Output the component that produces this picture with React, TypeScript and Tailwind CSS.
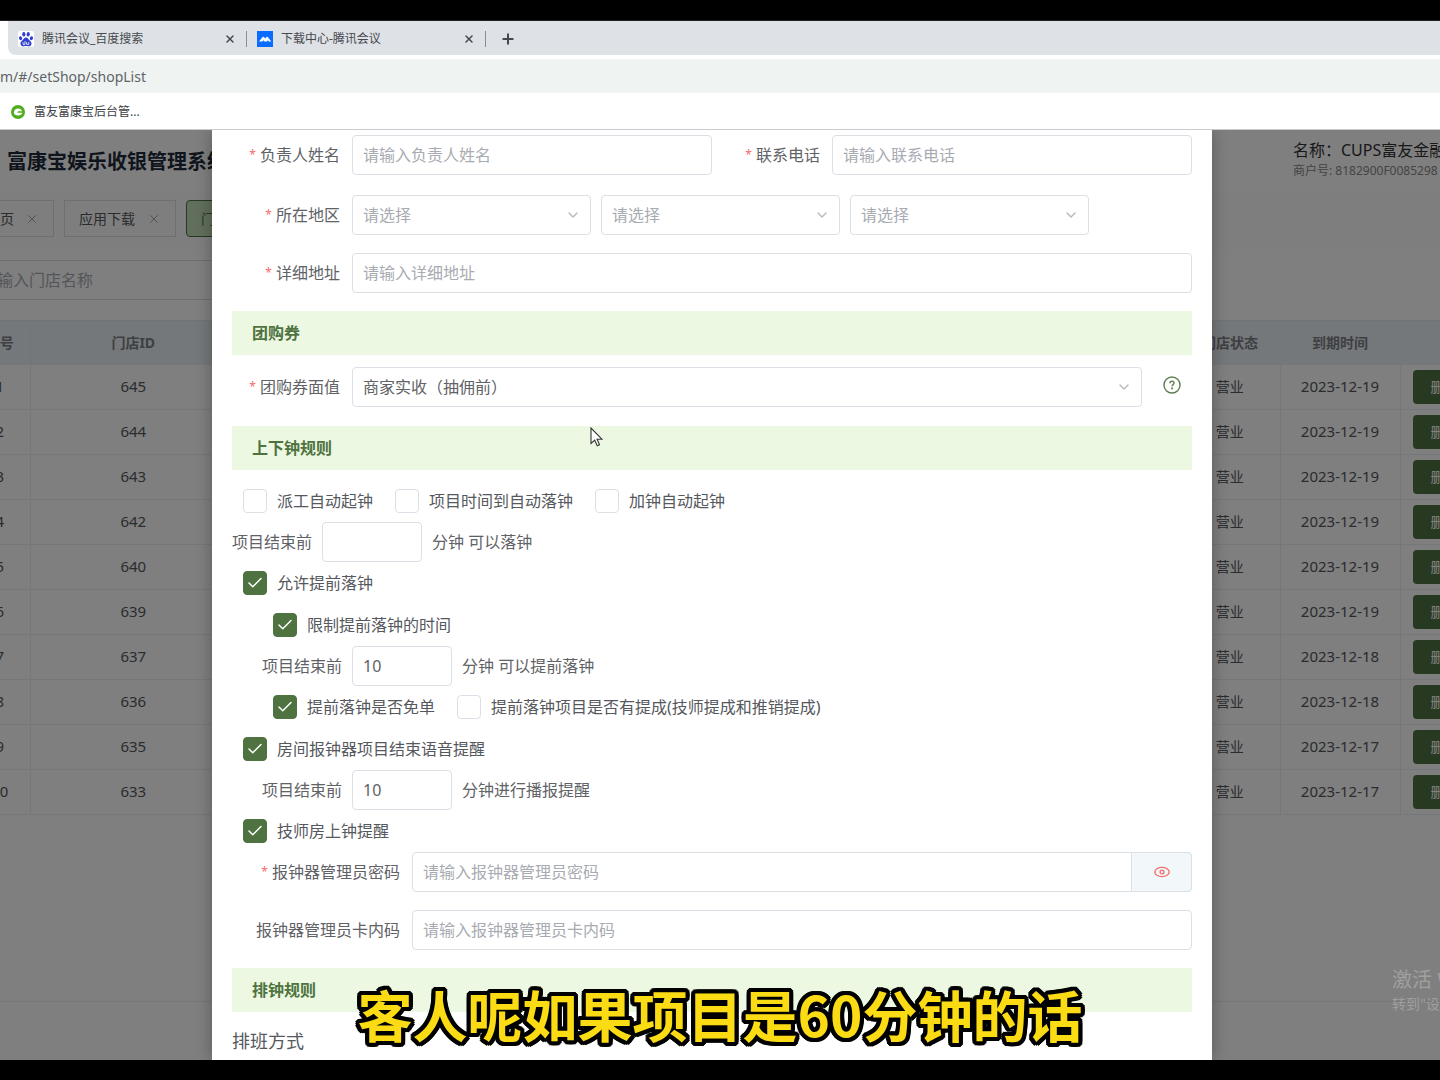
import { useState } from 'react'
import type { ReactNode } from 'react'
import { Check, ChevronDown, Plus, X } from 'lucide-react'

interface Shop {
  no: number
  id: string
  expires: string
}

const SHOPS: Shop[] = [
  { no: 1, id: '645', expires: '2023-12-19' },
  { no: 2, id: '644', expires: '2023-12-19' },
  { no: 3, id: '643', expires: '2023-12-19' },
  { no: 4, id: '642', expires: '2023-12-19' },
  { no: 5, id: '640', expires: '2023-12-19' },
  { no: 6, id: '639', expires: '2023-12-19' },
  { no: 7, id: '637', expires: '2023-12-18' },
  { no: 8, id: '636', expires: '2023-12-18' },
  { no: 9, id: '635', expires: '2023-12-17' },
  { no: 10, id: '633', expires: '2023-12-17' },
]

const inputClass =
  'h-10 rounded border border-[#dcdfe6] bg-white px-2.5 text-base text-[#606266] placeholder:text-[#a8abb2] focus:outline-none focus:border-[#4f7340]'

// ── Icons ──

function BaiduIcon() {
  return (
    <svg viewBox="0 0 16 16" className="size-4 shrink-0" aria-hidden="true">
      <rect width="16" height="16" rx="2" fill="#fff" />
      <g fill="#2f3fd0">
        <ellipse cx="2.6" cy="7.2" rx="1.6" ry="2" transform="rotate(-15 2.6 7.2)" />
        <ellipse cx="5.8" cy="3.2" rx="1.6" ry="2.2" />
        <ellipse cx="10.2" cy="3.2" rx="1.6" ry="2.2" transform="rotate(8 10.2 3.2)" />
        <ellipse cx="13.4" cy="7.2" rx="1.6" ry="2" transform="rotate(15 13.4 7.2)" />
        <path d="M8 6.4c1.7 0 2.3 1.6 3.4 2.8 1.2 1.2 2.4 2 2.1 3.8-.3 2-2 2.5-3.4 2.2-1.4-.3-2.8-.3-4.2 0-1.4.3-3.1-.2-3.4-2.2-.3-1.8.9-2.6 2.100-3.800C5.700 8 6.300 6.400 8 6.400z" />
      </g>
      <path d="M5 11.200v2.200h2v-3.400M8.600 11v2.400h2.200V11" fill="none" stroke="#fff" strokeWidth="0.8" />
    </svg>
  )
}

function MeetingIcon() {
  return (
    <svg viewBox="0 0 16 16" className="size-4 shrink-0" aria-hidden="true">
      <rect width="16" height="16" fill="#0a6cff" />
      <path d="M2 10.600 5.200 6.400c.6-.8 1.600-.8 2.200 0l.8 1.100.8-1.100c.6-.8 1.600-.8 2.200 0l3 4.200h-2.300l-1-1.300-1 1.300H7.400l-1-1.300-1 1.300z" fill="#fff" />
    </svg>
  )
}

function SiteIcon() {
  return (
    <svg viewBox="0 0 14 14" className="size-3.5 shrink-0" aria-hidden="true">
      <circle cx="7" cy="7" r="7" fill="#4fae1e" />
      <path d="M2.800 7.800C3 4.800 4.800 3.400 7.200 3.400c2 0 3.400 1.200 3.900 2.900H7.600c-.8 0-1.200.5-1.200 1.500h5c-.3 1.600-2 2.700-4.200 2.700-2.400 0-4.200-.9-4.400-2.700z" fill="#fff" />
    </svg>
  )
}

function EyeIcon() {
  return (
    <svg viewBox="0 0 16 16" className="size-4" fill="none" stroke="#f07070" strokeWidth="1.400" aria-hidden="true">
      <ellipse cx="8" cy="8" rx="7.200" ry="4.600" />
      <circle cx="8" cy="8" r="1.900" />
    </svg>
  )
}

function HelpIcon() {
  return (
    <svg viewBox="0 0 18 18" className="size-[18px]" fill="none" stroke="#5f7f52" strokeWidth="1.400" aria-hidden="true">
      <circle cx="9" cy="9" r="8" />
      <path d="M6.900 7.300c0-1.300.9-2.100 2.100-2.100s2.100.8 2.100 1.900c0 1.500-2 1.500-2 3.200" />
      <circle cx="9.100" cy="12.400" r="0.400" />
    </svg>
  )
}

// ── Form parts ──

function FieldLabel({ htmlFor, required, wide, children }: { htmlFor: string; required?: boolean; wide?: boolean; children: ReactNode }) {
  return (
    <label
      htmlFor={htmlFor}
      className={`flex shrink-0 justify-end gap-1 pr-3 whitespace-nowrap text-[#606266] ${wide ? 'w-[180px]' : 'w-[120px]'}`}
    >
      {required && <span className="text-xs leading-6 text-[#f56c6c]">*</span>}
      {children}
    </label>
  )
}

function SelectBox({ id, label, text, filled, className }: { id: string; label?: string; text: string; filled?: boolean; className: string }) {
  return (
    <div className={`relative ${className}`}>
      <select
        id={id}
        aria-label={label}
        className={`h-10 w-full appearance-none rounded border border-[#dcdfe6] bg-white px-2.5 focus:outline-none ${filled ? 'text-[#606266]' : 'text-[#a8abb2]'}`}
      >
        <option>{text}</option>
      </select>
      <ChevronDown className="pointer-events-none absolute top-3 right-2.5 size-4 text-[#b4b8bf]" strokeWidth={2} />
    </div>
  )
}

function CheckItem({ label, defaultChecked = false }: { label: string; defaultChecked?: boolean }) {
  const [checked, setChecked] = useState(defaultChecked)
  return (
    <label className="flex items-center gap-2.5 text-[#55585d]">
      <span className="grid size-6 place-items-center">
        <input
          type="checkbox"
          checked={checked}
          onChange={(e) => setChecked(e.target.checked)}
          className="col-start-1 row-start-1 size-6 appearance-none rounded border border-[#dcdfe6] bg-white checked:border-[#4f7340] checked:bg-[#4f7340]"
        />
        {checked && (
          <Check className="pointer-events-none col-start-1 row-start-1 size-[18px] text-white" strokeWidth={2} />
        )}
      </span>
      {label}
    </label>
  )
}

function MinutesRow({ id, value, after, indent }: { id: string; value: string; after: string; indent?: boolean }) {
  return (
    <div className={`flex h-10 items-center gap-2.5 text-[#606266] ${indent ? 'pl-[30px]' : ''}`}>
      <label htmlFor={id}>项目结束前</label>
      <input id={id} type="text" defaultValue={value} className={`${inputClass} w-[100px]`} />
      <span>{after}</span>
    </div>
  )
}

function SectionTitle({ children }: { children: ReactNode }) {
  return (
    <h2 className="flex h-11 items-center bg-[#ecf8e1] px-5 text-base font-bold text-[#4f7340]">{children}</h2>
  )
}

function ShopForm() {
  return (
    <form className="min-w-0 flex-1 overflow-hidden bg-white px-5 pt-[5px] text-base shadow-[0_0_16px_rgba(0,0,0,0.3)]">
      <div className="mb-5 flex items-center">
        <FieldLabel htmlFor="owner" required>负责人姓名</FieldLabel>
        <input id="owner" type="text" placeholder="请输入负责人姓名" className={`${inputClass} min-w-0 flex-1`} />
        <FieldLabel htmlFor="phone" required>联系电话</FieldLabel>
        <input id="phone" type="text" placeholder="请输入联系电话" className={`${inputClass} min-w-0 flex-1`} />
      </div>

      <div className="mb-[18px] flex items-center">
        <FieldLabel htmlFor="province" required>所在地区</FieldLabel>
        <div className="flex flex-1 gap-2.5">
          <SelectBox id="province" text="请选择" className="w-[239px]" />
          <SelectBox id="city" label="城市" text="请选择" className="w-[239px]" />
          <SelectBox id="district" label="区县" text="请选择" className="w-[239px]" />
        </div>
      </div>

      <div className="mb-[18px] flex items-center">
        <FieldLabel htmlFor="address" required>详细地址</FieldLabel>
        <input id="address" type="text" placeholder="请输入详细地址" className={`${inputClass} min-w-0 flex-1`} />
      </div>

      <SectionTitle>团购券</SectionTitle>
      <div className="mt-3 mb-[19px] flex items-center">
        <FieldLabel htmlFor="coupon" required>团购券面值</FieldLabel>
        <SelectBox id="coupon" text="商家实收（抽佣前）" filled className="flex-1" />
        <button type="button" aria-label="说明" className="flex w-[50px] justify-center pb-1 pl-2.5">
          <HelpIcon />
        </button>
      </div>

      <SectionTitle>上下钟规则</SectionTitle>
      <div className="mt-2.5">
        <div className="flex h-[42px] items-center gap-[22px] pl-[11px]">
          <CheckItem label="派工自动起钟" />
          <CheckItem label="项目时间到自动落钟" />
          <CheckItem label="加钟自动起钟" />
        </div>
        <MinutesRow id="end-before" value="" after="分钟 可以落钟" />
        <div className="flex h-[42px] items-center pl-[11px]">
          <CheckItem label="允许提前落钟" defaultChecked />
        </div>
        <div className="flex h-[42px] items-center pl-[41px]">
          <CheckItem label="限制提前落钟的时间" defaultChecked />
        </div>
        <MinutesRow id="early-before" value="10" after="分钟 可以提前落钟" indent />
        <div className="flex h-[42px] items-center gap-[22px] pl-[41px]">
          <CheckItem label="提前落钟是否免单" defaultChecked />
          <CheckItem label="提前落钟项目是否有提成(技师提成和推销提成)" />
        </div>
        <div className="flex h-[42px] items-center pl-[11px]">
          <CheckItem label="房间报钟器项目结束语音提醒" defaultChecked />
        </div>
        <MinutesRow id="voice-before" value="10" after="分钟进行播报提醒" indent />
        <div className="flex h-[42px] items-center pl-[11px]">
          <CheckItem label="技师房上钟提醒" defaultChecked />
        </div>
      </div>

      <div className="mb-[18px] flex items-center">
        <FieldLabel htmlFor="admin-pwd" required wide>报钟器管理员密码</FieldLabel>
        <input id="admin-pwd" type="text" placeholder="请输入报钟器管理员密码" className={`${inputClass} min-w-0 flex-1 rounded-r-none`} />
        <button
          type="button"
          aria-label="显示密码"
          className="flex h-10 w-[60px] items-center justify-center rounded-r border border-l-0 border-[#dcdfe6] bg-[#f2f7f9]"
        >
          <EyeIcon />
        </button>
      </div>
      <div className="mb-[18px] flex items-center">
        <FieldLabel htmlFor="admin-card" wide>报钟器管理员卡内码</FieldLabel>
        <input id="admin-card" type="text" placeholder="请输入报钟器管理员卡内码" className={`${inputClass} min-w-0 flex-1`} />
      </div>

      <SectionTitle>排钟规则</SectionTitle>
      <p className="mt-[15px] text-lg text-[#55585d]">排班方式</p>
    </form>
  )
}

// ── Page under the dialog ──

function ShopListPage() {
  return (
    <div className="h-full bg-white">
      <header className="flex h-[63px] justify-between pl-[7px]">
        <h1 className="pt-[18px] text-xl font-bold text-[#1f2a38]">富康宝娱乐收银管理系统</h1>
        <div className="w-[147px] overflow-hidden pt-2 whitespace-nowrap">
          <p className="text-base leading-6 text-[#303133]">名称：CUPS富友金融</p>
          <p className="text-xs leading-[18px] text-[#888]">商户号: 8182900F0085298</p>
        </div>
      </header>

      <nav className="flex h-[57px] items-center gap-2.5 bg-[#fcfcfc] pb-1.5 text-sm text-[#55585d]">
        <a href="#home" className="flex h-[37px] w-[54px] items-center justify-between border border-l-0 border-[#dcdfe6] pr-3.5">
          页
          <X className="size-3.5 text-[#999]" strokeWidth={1.5} />
        </a>
        <a href="#download" className="flex h-[37px] w-28 items-center justify-between border border-[#dcdfe6] px-3.5">
          应用下载
          <X className="size-3.5 text-[#999]" strokeWidth={1.5} />
        </a>
        <a href="#shops" className="flex h-[37px] w-28 items-center rounded-sm border border-[#4f7340] bg-[#c5deb8] pl-3.5 text-[#4f7340]">
          门店管理
        </a>
      </nav>

      <div className="-mr-[120px] -ml-[30px] pt-2.5">
        <input type="text" aria-label="门店名称" placeholder="请输入门店名称" className={`${inputClass} w-[280px]`} />
        <table className="mt-5 w-full table-fixed border-t border-[#e4e7ed] text-center text-sm text-[#55585d]">
          <colgroup>
            <col className="w-[60px]" />
            <col className="w-[206px]" />
            <col />
            <col className="w-[100px]" />
            <col className="w-[120px]" />
            <col className="w-[160px]" />
          </colgroup>
          <thead>
            <tr className="h-11 bg-[#ebf0f4] text-[#7b7f86]">
              <th className="border-r border-[#e4e8ec]">序号</th>
              <th>门店ID</th>
              <th />
              <th>门店状态</th>
              <th>到期时间</th>
              <th />
            </tr>
          </thead>
          <tbody>
            {SHOPS.map((shop) => (
              <tr key={shop.no} className="h-[45px] border-b border-[#ebeef5]">
                <td className="border-r border-[#ebeef5] text-[15px]">{shop.no}</td>
                <td className="text-[15px]">{shop.id}</td>
                <td />
                <td className="border-r border-[#ebeef5]">营业</td>
                <td className="border-r border-[#ebeef5] text-[15px]">{shop.expires}</td>
                <td className="pl-3 text-left">
                  <button type="button" className="block h-[34px] rounded bg-[#4f7340] px-[18px] text-sm text-white">删除</button>
                </td>
              </tr>
            ))}
          </tbody>
        </table>
        <div className="mt-[186px] border-t border-[#ebeef5]" />
      </div>
    </div>
  )
}

// ── Browser window ──

function BrowserChrome() {
  return (
    <>
      <div className="flex h-[34px] shrink-0 bg-[#dee1e6]">
        <div className="flex flex-1 bg-white">
          <div className="w-2 rounded-tr-lg bg-white" />
          <div className="flex flex-1 items-center rounded-bl-lg bg-[#dee1e6] pt-px text-xs text-[#45494d]">
            <div className="flex w-[239px] items-center gap-2 border-r border-[#8a8d91] px-2.5">
              <BaiduIcon />
              <span className="flex-1">腾讯会议_百度搜索</span>
              <button type="button" aria-label="关闭标签页"><X className="size-3" strokeWidth={3} /></button>
            </div>
            <div className="flex w-[239px] items-center gap-2 border-r border-[#8a8d91] px-2.5">
              <MeetingIcon />
              <span className="flex-1">下载中心-腾讯会议</span>
              <button type="button" aria-label="关闭标签页"><X className="size-3" strokeWidth={3} /></button>
            </div>
            <button type="button" aria-label="新标签页" className="pl-3.5"><Plus className="size-4" strokeWidth={3} /></button>
          </div>
        </div>
      </div>
      <div className="flex shrink-0 bg-white pt-1">
        <input
          type="text"
          aria-label="地址"
          defaultValue="m/#/setShop/shopList"
          className="h-[34px] w-full bg-[#eff3f2] text-sm text-[#5f6368] focus:outline-none"
        />
      </div>
      <div className="flex h-[37px] shrink-0 items-center border-b border-[#c8cacc] bg-white pt-px pl-[11px] text-xs text-[#3c4043]">
        <a href="#bookmark" className="flex items-center gap-[9px]">
          <SiteIcon />
          富友富康宝后台管...
        </a>
      </div>
    </>
  )
}

export default function App() {
  return (
    <div className="flex h-screen flex-col overflow-hidden bg-black py-5 font-['Noto_Sans','Noto_Sans_CJK_SC',sans-serif]">
      <div className="h-px shrink-0 bg-[#222]" />
      <BrowserChrome />

      <main className="relative min-h-0 flex-1 overflow-hidden bg-white">
        <ShopListPage />

        <div role="dialog" aria-label="门店信息" className="absolute inset-0 flex bg-black/50 pr-[228px] pl-[212px]">
          <ShopForm />
        </div>

        {/* system activation notice */}
        <div className="absolute right-0 bottom-[46px] w-12 overflow-hidden whitespace-nowrap text-[#a0a0a0]">
          <p className="text-xl leading-7">激活 Windows</p>
          <p className="text-sm leading-5">转到"设置"以激活 Windows。</p>
        </div>

        {/* mouse pointer */}
        <svg viewBox="0 0 13 20" className="absolute top-[297px] left-[590px] h-5 w-[13px]" aria-hidden="true">
          <path d="M1 1v15.500l3.700-3.400 2.500 5.600 2.300-1-2.400-5.500h4.800z" fill="#fff" stroke="#333" strokeWidth="1.100" />
        </svg>

        {/* subtitle, outlined by a ring of hard shadows */}
        <p className="absolute inset-x-0 bottom-2 text-center font-['Noto_Sans_CJK_SC',sans-serif] text-[55px] leading-[78px] font-bold whitespace-nowrap text-[#fadb14] [text-shadow:4px_0_#000,-4px_0_#000,0_4px_#000,0_-4px_#000,4px_2px_#000,4px_-2px_#000,-4px_2px_#000,-4px_-2px_#000,2px_4px_#000,2px_-4px_#000,-2px_4px_#000,-2px_-4px_#000,3px_3px_#000,3px_-3px_#000,-3px_3px_#000,-3px_-3px_#000,2px_2px_#000,-2px_-2px_#000,2px_-2px_#000,-2px_2px_#000]">
          客人呢如果项目是60分钟的话
        </p>
      </main>
    </div>
  )
}
